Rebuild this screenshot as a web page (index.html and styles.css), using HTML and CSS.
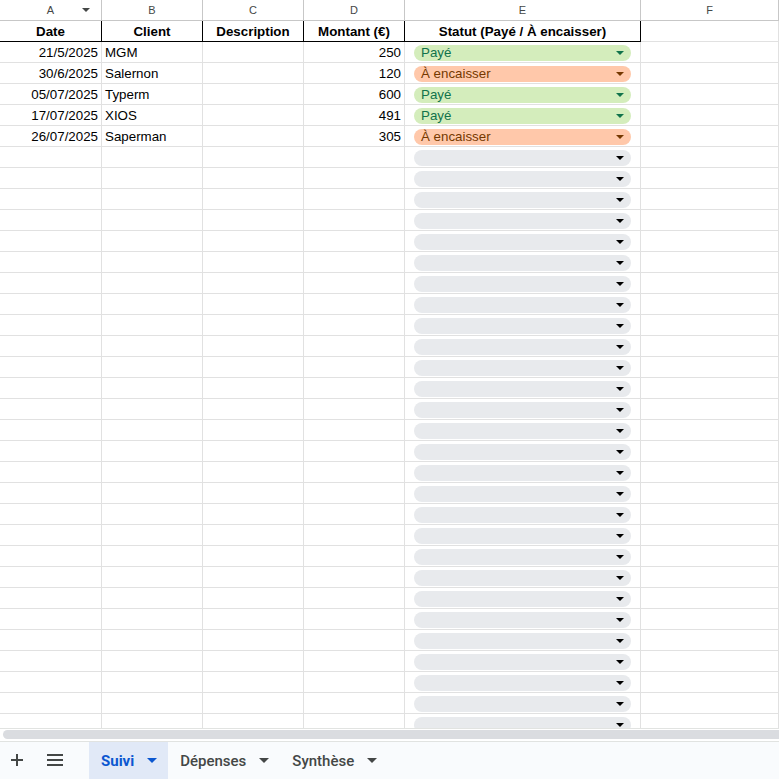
FILE: index.html
```html
<!DOCTYPE html>
<html lang="fr">
<head>
    <meta charset="UTF-8">
    <meta name="viewport" content="width=device-width, initial-scale=1.0">
    <title>Suivi - Factures</title>
    <link rel="stylesheet" href="styles.css">
</head>
<body>
    <div class="sheet">
        <div class="row col-heads">
            <div class="cell">A<span class="filter"></span></div>
            <div class="cell">B</div>
            <div class="cell">C</div>
            <div class="cell">D</div>
            <div class="cell">E</div>
            <div class="cell">F</div>
        </div>
        <div class="row head">
            <div class="cell">Date</div>
            <div class="cell">Client</div>
            <div class="cell">Description</div>
            <div class="cell">Montant (€)</div>
            <div class="cell">Statut (Payé / À encaisser)</div>
            <div class="cell plain"></div>
        </div>
        <div class="row">
            <div class="cell num">21/5/2025</div>
            <div class="cell">MGM</div>
            <div class="cell"></div>
            <div class="cell num">250</div>
            <div class="cell"><span class="chip paid">Payé</span></div>
            <div class="cell"></div>
        </div>
        <div class="row">
            <div class="cell num">30/6/2025</div>
            <div class="cell">Salernon</div>
            <div class="cell"></div>
            <div class="cell num">120</div>
            <div class="cell"><span class="chip due">À encaisser</span></div>
            <div class="cell"></div>
        </div>
        <div class="row">
            <div class="cell num">05/07/2025</div>
            <div class="cell">Typerm</div>
            <div class="cell"></div>
            <div class="cell num">600</div>
            <div class="cell"><span class="chip paid">Payé</span></div>
            <div class="cell"></div>
        </div>
        <div class="row">
            <div class="cell num">17/07/2025</div>
            <div class="cell">XIOS</div>
            <div class="cell"></div>
            <div class="cell num">491</div>
            <div class="cell"><span class="chip paid">Payé</span></div>
            <div class="cell"></div>
        </div>
        <div class="row">
            <div class="cell num">26/07/2025</div>
            <div class="cell">Saperman</div>
            <div class="cell"></div>
            <div class="cell num">305</div>
            <div class="cell"><span class="chip due">À encaisser</span></div>
            <div class="cell"></div>
        </div>
        <!-- 30 empty rows, each with an empty status dropdown -->
        <div class="row"><div class="cell"></div><div class="cell"></div><div class="cell"></div><div class="cell"></div><div class="cell"><span class="chip"></span></div><div class="cell"></div></div>
        <div class="row"><div class="cell"></div><div class="cell"></div><div class="cell"></div><div class="cell"></div><div class="cell"><span class="chip"></span></div><div class="cell"></div></div>
        <div class="row"><div class="cell"></div><div class="cell"></div><div class="cell"></div><div class="cell"></div><div class="cell"><span class="chip"></span></div><div class="cell"></div></div>
        <div class="row"><div class="cell"></div><div class="cell"></div><div class="cell"></div><div class="cell"></div><div class="cell"><span class="chip"></span></div><div class="cell"></div></div>
        <div class="row"><div class="cell"></div><div class="cell"></div><div class="cell"></div><div class="cell"></div><div class="cell"><span class="chip"></span></div><div class="cell"></div></div>
        <div class="row"><div class="cell"></div><div class="cell"></div><div class="cell"></div><div class="cell"></div><div class="cell"><span class="chip"></span></div><div class="cell"></div></div>
        <div class="row"><div class="cell"></div><div class="cell"></div><div class="cell"></div><div class="cell"></div><div class="cell"><span class="chip"></span></div><div class="cell"></div></div>
        <div class="row"><div class="cell"></div><div class="cell"></div><div class="cell"></div><div class="cell"></div><div class="cell"><span class="chip"></span></div><div class="cell"></div></div>
        <div class="row"><div class="cell"></div><div class="cell"></div><div class="cell"></div><div class="cell"></div><div class="cell"><span class="chip"></span></div><div class="cell"></div></div>
        <div class="row"><div class="cell"></div><div class="cell"></div><div class="cell"></div><div class="cell"></div><div class="cell"><span class="chip"></span></div><div class="cell"></div></div>
        <div class="row"><div class="cell"></div><div class="cell"></div><div class="cell"></div><div class="cell"></div><div class="cell"><span class="chip"></span></div><div class="cell"></div></div>
        <div class="row"><div class="cell"></div><div class="cell"></div><div class="cell"></div><div class="cell"></div><div class="cell"><span class="chip"></span></div><div class="cell"></div></div>
        <div class="row"><div class="cell"></div><div class="cell"></div><div class="cell"></div><div class="cell"></div><div class="cell"><span class="chip"></span></div><div class="cell"></div></div>
        <div class="row"><div class="cell"></div><div class="cell"></div><div class="cell"></div><div class="cell"></div><div class="cell"><span class="chip"></span></div><div class="cell"></div></div>
        <div class="row"><div class="cell"></div><div class="cell"></div><div class="cell"></div><div class="cell"></div><div class="cell"><span class="chip"></span></div><div class="cell"></div></div>
        <div class="row"><div class="cell"></div><div class="cell"></div><div class="cell"></div><div class="cell"></div><div class="cell"><span class="chip"></span></div><div class="cell"></div></div>
        <div class="row"><div class="cell"></div><div class="cell"></div><div class="cell"></div><div class="cell"></div><div class="cell"><span class="chip"></span></div><div class="cell"></div></div>
        <div class="row"><div class="cell"></div><div class="cell"></div><div class="cell"></div><div class="cell"></div><div class="cell"><span class="chip"></span></div><div class="cell"></div></div>
        <div class="row"><div class="cell"></div><div class="cell"></div><div class="cell"></div><div class="cell"></div><div class="cell"><span class="chip"></span></div><div class="cell"></div></div>
        <div class="row"><div class="cell"></div><div class="cell"></div><div class="cell"></div><div class="cell"></div><div class="cell"><span class="chip"></span></div><div class="cell"></div></div>
        <div class="row"><div class="cell"></div><div class="cell"></div><div class="cell"></div><div class="cell"></div><div class="cell"><span class="chip"></span></div><div class="cell"></div></div>
        <div class="row"><div class="cell"></div><div class="cell"></div><div class="cell"></div><div class="cell"></div><div class="cell"><span class="chip"></span></div><div class="cell"></div></div>
        <div class="row"><div class="cell"></div><div class="cell"></div><div class="cell"></div><div class="cell"></div><div class="cell"><span class="chip"></span></div><div class="cell"></div></div>
        <div class="row"><div class="cell"></div><div class="cell"></div><div class="cell"></div><div class="cell"></div><div class="cell"><span class="chip"></span></div><div class="cell"></div></div>
        <div class="row"><div class="cell"></div><div class="cell"></div><div class="cell"></div><div class="cell"></div><div class="cell"><span class="chip"></span></div><div class="cell"></div></div>
        <div class="row"><div class="cell"></div><div class="cell"></div><div class="cell"></div><div class="cell"></div><div class="cell"><span class="chip"></span></div><div class="cell"></div></div>
        <div class="row"><div class="cell"></div><div class="cell"></div><div class="cell"></div><div class="cell"></div><div class="cell"><span class="chip"></span></div><div class="cell"></div></div>
        <div class="row"><div class="cell"></div><div class="cell"></div><div class="cell"></div><div class="cell"></div><div class="cell"><span class="chip"></span></div><div class="cell"></div></div>
        <div class="row"><div class="cell"></div><div class="cell"></div><div class="cell"></div><div class="cell"></div><div class="cell"><span class="chip"></span></div><div class="cell"></div></div>
        <div class="row"><div class="cell"></div><div class="cell"></div><div class="cell"></div><div class="cell"></div><div class="cell"><span class="chip"></span></div><div class="cell"></div></div>
    </div>

    <div class="scrollbar"><div class="thumb"></div></div>

    <div class="tabs">
        <button class="tool add"></button>
        <button class="tool list"><span></span></button>
        <button class="tab active">Suivi<span class="caret"></span></button>
        <button class="tab">Dépenses<span class="caret"></span></button>
        <button class="tab">Synthèse<span class="caret"></span></button>
    </div>
</body>
</html>
```

FILE: styles.css
```css
* {
    margin: 0;
    padding: 0;
    box-sizing: border-box;
}

body {
    width: 779px;
    height: 779px;
    overflow: hidden;
    background: #fff;
    font-family: 'Liberation Sans', Arial, sans-serif;
    font-size: 13.33px;
    color: #000;
}

.sheet {
    height: 728px;
    overflow: hidden;
}

.row {
    display: grid;
    grid-template-columns: 102px 101px 101px 101px 236px 138px;
    height: 21px;
}

.cell {
    position: relative;
    border-right: 1px solid #e1e1e1;
    border-bottom: 1px solid #e1e1e1;
    padding: 1px 3px 0;
    line-height: 20px;
    white-space: nowrap;
    overflow: hidden;
}

.num {
    text-align: right;
}

/* column letters */
.col-heads .cell {
    padding-top: 0;
    text-align: center;
    font-size: 11px;
    color: #444746;
    border-right-color: #c7c7c7;
    border-bottom-color: #c7c7c7;
}

.filter {
    position: absolute;
    right: 11px;
    top: 8px;
    border-left: 4px solid transparent;
    border-right: 4px solid transparent;
    border-top: 4px solid #444746;
}

/* header row */
.head .cell {
    text-align: center;
    font-weight: bold;
    border-right-color: #000;
    border-bottom-color: #000;
}

.head .cell.plain {
    border-right-color: #e1e1e1;
    border-bottom-color: #e1e1e1;
}

/* status chips */
.chip {
    position: relative;
    display: block;
    height: 16px;
    margin: 2px 6px 0 6px;
    padding: 0 20px 0 7px;
    border-radius: 8px;
    background: #e8eaed;
    line-height: 16px;
    font-size: 13.33px;
}

.chip::after {
    content: '';
    position: absolute;
    right: 7px;
    top: 6px;
    border-left: 4px solid transparent;
    border-right: 4px solid transparent;
    border-top: 4px solid #000;
}

.chip.paid {
    background: #d4edbc;
    color: #11734b;
}

.chip.paid::after {
    border-top-color: #11734b;
}

.chip.due {
    background: #ffc8aa;
    color: #753800;
}

.chip.due::after {
    border-top-color: #753800;
}

/* horizontal scrollbar */
.scrollbar {
    height: 14px;
    padding: 1px 0 3px 3px;
    border-top: 1px solid #e1e3e1;
    border-bottom: 1px solid #e1e3e1;
    background: #fff;
}

.thumb {
    height: 9px;
    border-radius: 5px 0 0 5px;
    background: #dadce0;
}

/* sheet tabs */
.tabs {
    display: flex;
    align-items: stretch;
    height: 37px;
    background: #f9fbfd;
    font-family: Roboto, 'Liberation Sans', sans-serif;
}

button {
    border: none;
    background: transparent;
    font-family: inherit;
    cursor: pointer;
}

.tool {
    position: relative;
    width: 40px;
}

.add {
    margin-left: -3px;
}

.add::before,
.add::after {
    content: '';
    position: absolute;
    left: 14px;
    top: 17px;
    width: 12px;
    height: 2px;
    background: #444746;
}

.add::after {
    transform: rotate(90deg);
}

.list span,
.list::before,
.list::after {
    content: '';
    position: absolute;
    left: 10px;
    width: 16px;
    height: 2px;
    background: #444746;
}

.list::before { top: 12px; }
.list span { top: 17px; }
.list::after { top: 22px; }

.tab {
    display: flex;
    align-items: center;
    padding: 0 11px 0 12px;
    font-size: 15px;
    font-weight: 500;
    color: #444746;
}

.tab.active {
    margin-left: 12px;
    background: #e1e9f7;
    color: #0b57d0;
    font-weight: bold;
}

.caret {
    margin-left: 13px;
    border-left: 5px solid transparent;
    border-right: 5px solid transparent;
    border-top: 5px solid #444746;
}

.tab.active .caret {
    border-top-color: #0b57d0;
}
```
